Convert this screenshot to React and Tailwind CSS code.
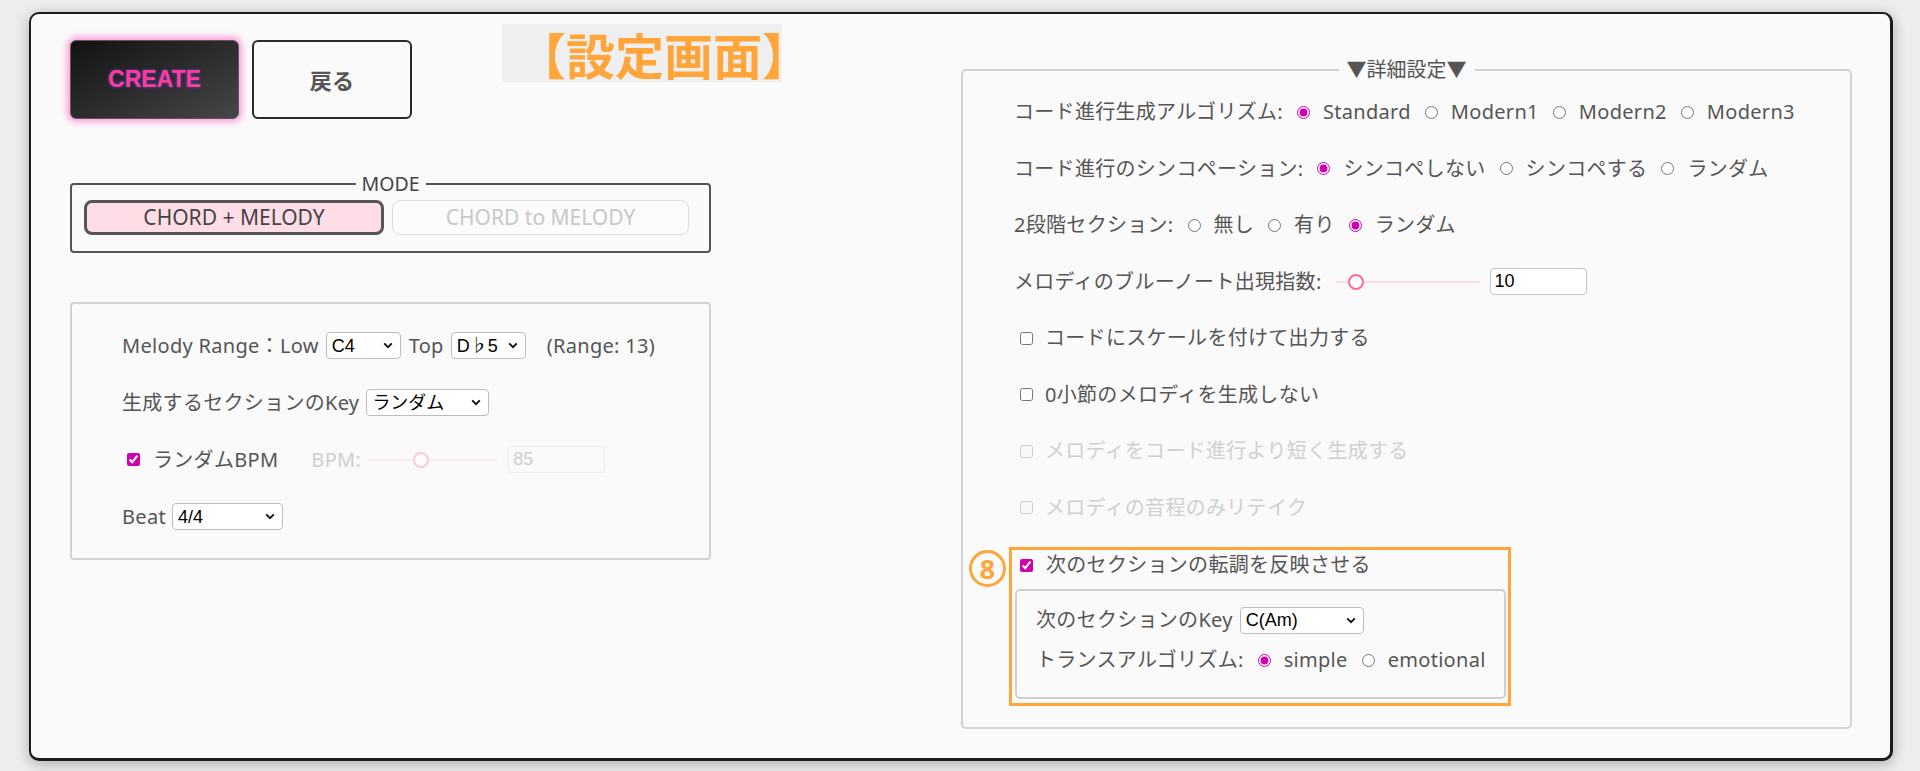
const FONT = "font-['Noto_Sans','Noto_Sans_CJK_JP',sans-serif]";

function Select({ value, className }) {
  return (
    <span
      className={`inline-flex items-center justify-between h-[27px] rounded-[4px] border border-[#bdbdbd] bg-white pl-[5px] pr-[7px] text-[18px] leading-none tracking-normal text-black font-['Liberation_Sans','Noto_Sans_CJK_JP',sans-serif] ${className}`}
    >
      <span>{value}</span>
      <svg width="10" height="7" viewBox="0 0 10 7">
        <path d="M1.2 1.4 L5 5.2 L8.8 1.4" stroke="#111" strokeWidth="1.9" fill="none" />
      </svg>
    </span>
  );
}

function Radio({ checked, label, disabled }) {
  return (
    <span className="inline-flex items-center ml-[14px]">
      <input
        type="radio"
        readOnly
        checked={checked}
        disabled={disabled}
        className="w-[13px] h-[13px] accent-[#d000b0]"
      />
      <span className="ml-[13px]">{label}</span>
    </span>
  );
}

function Slider({ thumbAt, width, disabled }) {
  return (
    <span className={`relative inline-flex items-center h-[20px] ${width}`}>
      <span className={`block w-full h-[2px] ${disabled ? "bg-[#fdebf0]" : "bg-[#ffdbe5]"}`} />
      <span
        className={`absolute top-[2px] w-[16px] h-[16px] rounded-full border-2 bg-white ${
          disabled ? "border-[#ffc9d6]" : "border-[#ff6d8f]"
        }`}
        style={{ left: thumbAt }}
      />
    </span>
  );
}

function Check({ checked, disabled }) {
  return (
    <input
      type="checkbox"
      readOnly
      checked={checked}
      disabled={disabled}
      className="w-[13px] h-[13px] accent-[#d000b0]"
    />
  );
}

export default function App() {
  return (
    <div className={`w-full h-[771px] overflow-hidden bg-[#ededed] pt-[12px] pl-[29px] pr-[27px] ${FONT} text-[#555] text-[20px] tracking-[0.3px]`}>
      <div className="relative h-[749px] rounded-[10px] border-2 border-r-[3px] border-b-[3px] border-[#1c1c1c] bg-[#fafafa] shadow-[0_3px_14px_rgba(0,0,0,0.28)] pl-[39px] pr-[38px] pt-[26px] flex justify-between items-start">
        {/* annotation label */}
        <div className="absolute left-[471px] top-[10px] w-[280px] h-[58px] bg-[#efefef] flex items-center">
          <span className="ml-[15px] whitespace-nowrap text-[49px] leading-none tracking-normal font-bold text-[#ffa53a] font-['Noto_Sans_CJK_JP',sans-serif]">
            【設定画面】
          </span>
        </div>

        {/* left column */}
        <div className="w-[641px] shrink-0 flex flex-col">
          <div className="flex gap-[13px] h-[79px]">
            <button className="w-[169px] h-[79px] rounded-[6px] border border-[#5a5a5a] bg-linear-to-br from-[#131313] to-[#474747] shadow-[0_0_6px_3px_#ff9bd6] font-['Liberation_Sans',Arial,sans-serif] font-bold text-[23px] tracking-normal text-[#ff3d8e] [text-shadow:0_0_3px_#5b3cff]">
              CREATE
            </button>
            <button className="w-[160px] h-[79px] rounded-[6px] border-2 border-[#2a2a2a] bg-[#fafafa] text-[22px] font-bold text-[#555] font-['Noto_Sans_CJK_JP',sans-serif]">
              戻る
            </button>
          </div>

          <fieldset className="mt-[53px] border-2 border-[#555] rounded-[4px] px-[12px] pt-[4px] pb-[16px]">
            <legend className="mx-auto px-[6px] text-[19.5px] leading-[24px] tracking-normal text-[#444]">MODE</legend>
            <div className="flex gap-[8px]">
              <button className="w-[300px] h-[35px] rounded-[8px] border-[3px] border-[#555] bg-[#ffdde6] text-[21px] leading-none tracking-normal text-[#444]">
                CHORD + MELODY
              </button>
              <button className="w-[297px] h-[35px] rounded-[8px] border border-[#dcdcdc] bg-[#fcfcfc] text-[21px] leading-none tracking-normal text-[#c8c8c8]">
                CHORD to MELODY
              </button>
            </div>
          </fieldset>

          <div className="mt-[49px] border-2 border-[#d2d2d2] rounded-[4px] pl-[50px] pt-[13px] pb-[13px]">
            <div className="h-[57px] flex items-center">
              <span>Melody Range：Low</span>
              <Select value="C4" className="ml-[7px] w-[75px]" />
              <span className="ml-[8px]">Top</span>
              <Select value="D♭5" className="ml-[7px] w-[75px]" />
              <span className="ml-[21px]">(Range: 13)</span>
            </div>
            <div className="h-[57px] flex items-center">
              <span>生成するセクションのKey</span>
              <Select value="ランダム" className="ml-[7px] w-[123px]" />
            </div>
            <div className="h-[57px] flex items-center">
              <span className="ml-[5px] inline-flex"><Check checked /></span>
              <span className="ml-[13px]">ランダムBPM</span>
              <span className="ml-[33px] text-[#cfcfcf]">BPM:</span>
              <Slider thumbAt="45px" width="ml-[7px] w-[129px]" disabled />
              <span className="ml-[11px] inline-flex items-center w-[97px] h-[27px] rounded-[4px] border border-[#ececec] bg-[#fafafa] pl-[4px] text-[18px] tracking-normal text-[#cfcfcf] font-['Liberation_Sans',sans-serif]">
                85
              </span>
            </div>
            <div className="h-[57px] flex items-center">
              <span>Beat</span>
              <Select value="4/4" className="ml-[6px] w-[111px]" />
            </div>
          </div>
        </div>

        {/* right column */}
        <fieldset className="w-[891px] shrink-0 mt-[16px] border-2 border-[#d2d2d2] rounded-[5px] pb-[21px]">
          <legend className="mx-auto px-[8px] text-[20px] leading-[28px] tracking-normal">▼詳細設定▼</legend>

          <div className="pl-[51px]">
            <div className="h-[56.5px] flex items-center">
              <span>コード進行生成アルゴリズム:</span>
              <Radio checked label="Standard" />
              <Radio label="Modern1" />
              <Radio label="Modern2" />
              <Radio label="Modern3" />
            </div>
            <div className="h-[56.5px] flex items-center">
              <span>コード進行のシンコペーション:</span>
              <Radio checked label="シンコペしない" />
              <Radio label="シンコペする" />
              <Radio label="ランダム" />
            </div>
            <div className="h-[56.5px] flex items-center">
              <span>2段階セクション:</span>
              <Radio label="無し" />
              <Radio label="有り" />
              <Radio checked label="ランダム" />
            </div>
            <div className="h-[56.5px] flex items-center">
              <span>メロディのブルーノート出現指数:</span>
              <Slider thumbAt="12px" width="ml-[14px] w-[144px]" />
              <span className="ml-[10px] inline-flex items-center w-[97px] h-[27px] rounded-[4px] border border-[#c4c4c4] bg-white pl-[4px] text-[18px] tracking-normal text-black font-['Liberation_Sans',sans-serif]">
                10
              </span>
            </div>
            <div className="h-[56.5px] flex items-center">
              <span className="ml-[6px] inline-flex"><Check /></span>
              <span className="ml-[12px]">コードにスケールを付けて出力する</span>
            </div>
            <div className="h-[56.5px] flex items-center">
              <span className="ml-[6px] inline-flex"><Check /></span>
              <span className="ml-[12px]">0小節のメロディを生成しない</span>
            </div>
            <div className="h-[56.5px] flex items-center text-[#d0d0d0]">
              <span className="ml-[6px] inline-flex"><Check disabled /></span>
              <span className="ml-[12px]">メロディをコード進行より短く生成する</span>
            </div>
            <div className="h-[56.5px] flex items-center text-[#d0d0d0]">
              <span className="ml-[6px] inline-flex"><Check disabled /></span>
              <span className="ml-[12px]">メロディの音程のみリテイク</span>
            </div>

            <div className="relative mt-[11px] ml-[-5px] w-[502px] h-[159px] border-[3px] border-[#ffa53a]">
              <span className="absolute left-[-43px] top-[0px] w-[37px] h-[37px] rounded-full border-[3px] border-[#ffa53a] flex items-center justify-center text-[27px] leading-none font-bold tracking-normal text-[#ffa53a]">
                8
              </span>
              <div className="h-[30px] flex items-center pl-[8px]">
                <Check checked />
                <span className="ml-[13px]">次のセクションの転調を反映させる</span>
              </div>
              <div className="mt-[9px] ml-[3px] w-[491px] h-[110px] border-2 border-[#cfcfcf] rounded-[5px] pl-[19px] pt-[9px]">
                <div className="h-[40px] flex items-center">
                  <span>次のセクションのKey</span>
                  <Select value="C(Am)" className="ml-[7px] w-[124px]" />
                </div>
                <div className="h-[40px] flex items-center">
                  <span>トランスアルゴリズム:</span>
                  <Radio checked label="simple" />
                  <Radio label="emotional" />
                </div>
              </div>
            </div>
          </div>
        </fieldset>
      </div>
    </div>
  );
}
